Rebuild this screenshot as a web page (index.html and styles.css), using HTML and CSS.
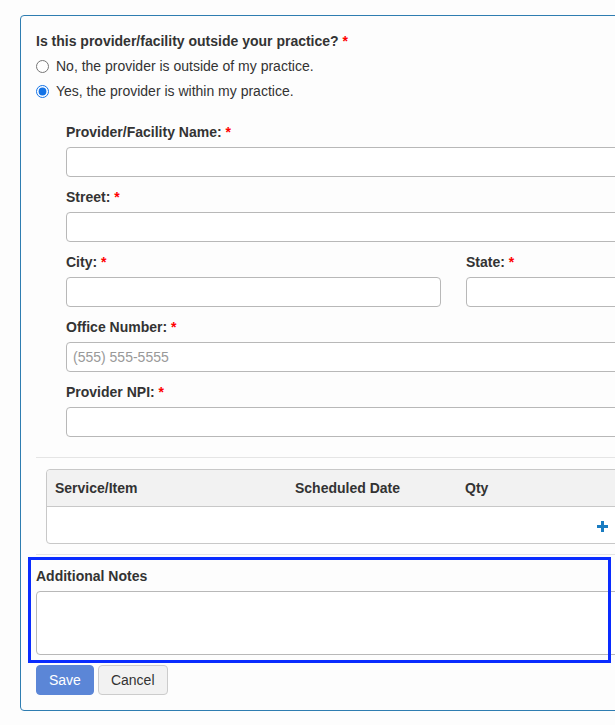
FILE: index.html
```html
<!DOCTYPE html>
<html lang="en">
<head>
  <meta charset="UTF-8" />
  <meta name="viewport" content="width=device-width, initial-scale=1.0"/>
  <title>Referral | Provider</title>
  <link rel="stylesheet" href="styles.css">
</head>
<body>

  <form class="panel">
    <div class="question">
      <label class="q-label">Is this provider/facility outside your practice? <span class="req">*</span></label>
      <label class="radio-row">
        <input type="radio" name="outside" value="no">
        <span>No, the provider is outside of my practice.</span>
      </label>
      <label class="radio-row">
        <input type="radio" name="outside" value="yes" checked>
        <span>Yes, the provider is within my practice.</span>
      </label>
    </div>

    <div class="provider-fields">
      <div class="field">
        <label>Provider/Facility Name: <span class="req">*</span></label>
        <input type="text">
      </div>
      <div class="field">
        <label>Street: <span class="req">*</span></label>
        <input type="text">
      </div>
      <div class="field-row">
        <div class="field">
          <label>City: <span class="req">*</span></label>
          <input type="text">
        </div>
        <div class="field">
          <label>State: <span class="req">*</span></label>
          <input type="text">
        </div>
      </div>
      <div class="field">
        <label>Office Number: <span class="req">*</span></label>
        <input type="text" placeholder="(555) 555-5555">
      </div>
      <div class="field">
        <label>Provider NPI: <span class="req">*</span></label>
        <input type="text">
      </div>
    </div>

    <hr class="sep-top">

    <div class="items-table">
      <div class="items-head">
        <div class="col-service">Service/Item</div>
        <div class="col-date">Scheduled Date</div>
        <div class="col-qty">Qty</div>
      </div>
      <div class="items-body">
        <button type="button" class="add-btn" title="Add item">
          <svg width="11" height="11" viewBox="0 0 11 11"><path d="M4 0h3v4h4v3H7v4H4V7H0V4h4z" fill="#1a7cc1"/></svg>
        </button>
      </div>
    </div>

    <hr>

    <div class="notes">
      <div class="highlight"></div>
      <label>Additional Notes</label>
      <textarea></textarea>
    </div>

    <div class="actions">
      <button type="button" class="btn btn-save">Save</button>
      <button type="button" class="btn btn-cancel">Cancel</button>
    </div>
  </form>

</body>
</html>
```

FILE: styles.css
```css
* {
  margin: 0;
  padding: 0;
  box-sizing: border-box;
  font-family: 'Liberation Sans', Arial, sans-serif;
}

html, body {
  overflow: hidden;
}

body {
  background-color: #fdfdfd;
  color: #333;
  font-size: 14px;
  line-height: 20px;
}

.panel {
  width: 720px;
  margin: 15px 0 0 20px;
  padding: 15px 15px 15px 15px;
  border: 1px solid #2f7db1;
  border-radius: 4px;
  background-color: #fdfdfd;
}

.req {
  color: #f00;
}

.q-label {
  display: block;
  font-weight: bold;
  margin-bottom: 5px;
}

.radio-row {
  display: flex;
  align-items: center;
  gap: 7px;
  height: 20px;
  margin-bottom: 5px;
}

.radio-row input {
  width: 13px;
  height: 13px;
  margin: 0;
  accent-color: #1473e6;
}

.provider-fields {
  padding: 16px 0 0 30px;
}

.field {
  margin-bottom: 10px;
}

.field label,
.notes label {
  display: block;
  font-weight: bold;
  margin-bottom: 5px;
}

.field input {
  display: block;
  width: 100%;
  height: 30px;
  padding: 5px 6px;
  border: 1px solid #b8b8b8;
  border-radius: 4px;
  background-color: #fff;
  font-size: 14px;
  color: #333;
}

.field input::placeholder {
  color: #999;
}

.field-row {
  display: grid;
  grid-template-columns: 375px 1fr;
  column-gap: 25px;
}

hr {
  border: none;
  border-top: 1px solid #e5e5e5;
  margin: 10px 0 11px;
}

.sep-top {
  margin-top: 20px;
}

.items-table {
  width: 590px;
  margin-left: 10px;
  border: 1px solid #c8c8c8;
  border-radius: 4px;
  background-color: #fff;
}

.items-head {
  display: flex;
  height: 37px;
  align-items: center;
  background-color: #f2f2f2;
  border-bottom: 1px solid #c8c8c8;
  border-radius: 4px 4px 0 0;
  font-weight: bold;
}

.items-head div {
  padding-left: 8px;
}

.col-service {
  width: 240px;
}

.col-date {
  width: 170px;
}

.items-body {
  display: flex;
  justify-content: flex-end;
  align-items: center;
  height: 36px;
  padding-right: 27px;
}

.add-btn {
  border: none;
  background: none;
  cursor: pointer;
  display: flex;
  margin-top: 2px;
}

.notes {
  position: relative;
  margin-bottom: 10px;
}

.notes textarea {
  display: block;
  width: 640px;
  height: 64px;
  border: 1px solid #b8b8b8;
  border-radius: 4px;
  background-color: #fff;
  resize: none;
}

.highlight {
  position: absolute;
  left: -8px;
  top: -9px;
  width: 583px;
  height: 106px;
  border: 3px solid #0a2cff;
  pointer-events: none;
}

.actions {
  display: flex;
  gap: 4px;
}

.btn {
  height: 30px;
  padding: 0 12px;
  font-size: 14px;
  border-radius: 4px;
  cursor: pointer;
}

.btn-save {
  background-color: #5b86d7;
  border: 1px solid #5b86d7;
  color: #fff;
}

.btn-cancel {
  background-color: #f2f2f2;
  border: 1px solid #ccc;
  color: #333;
}
```
